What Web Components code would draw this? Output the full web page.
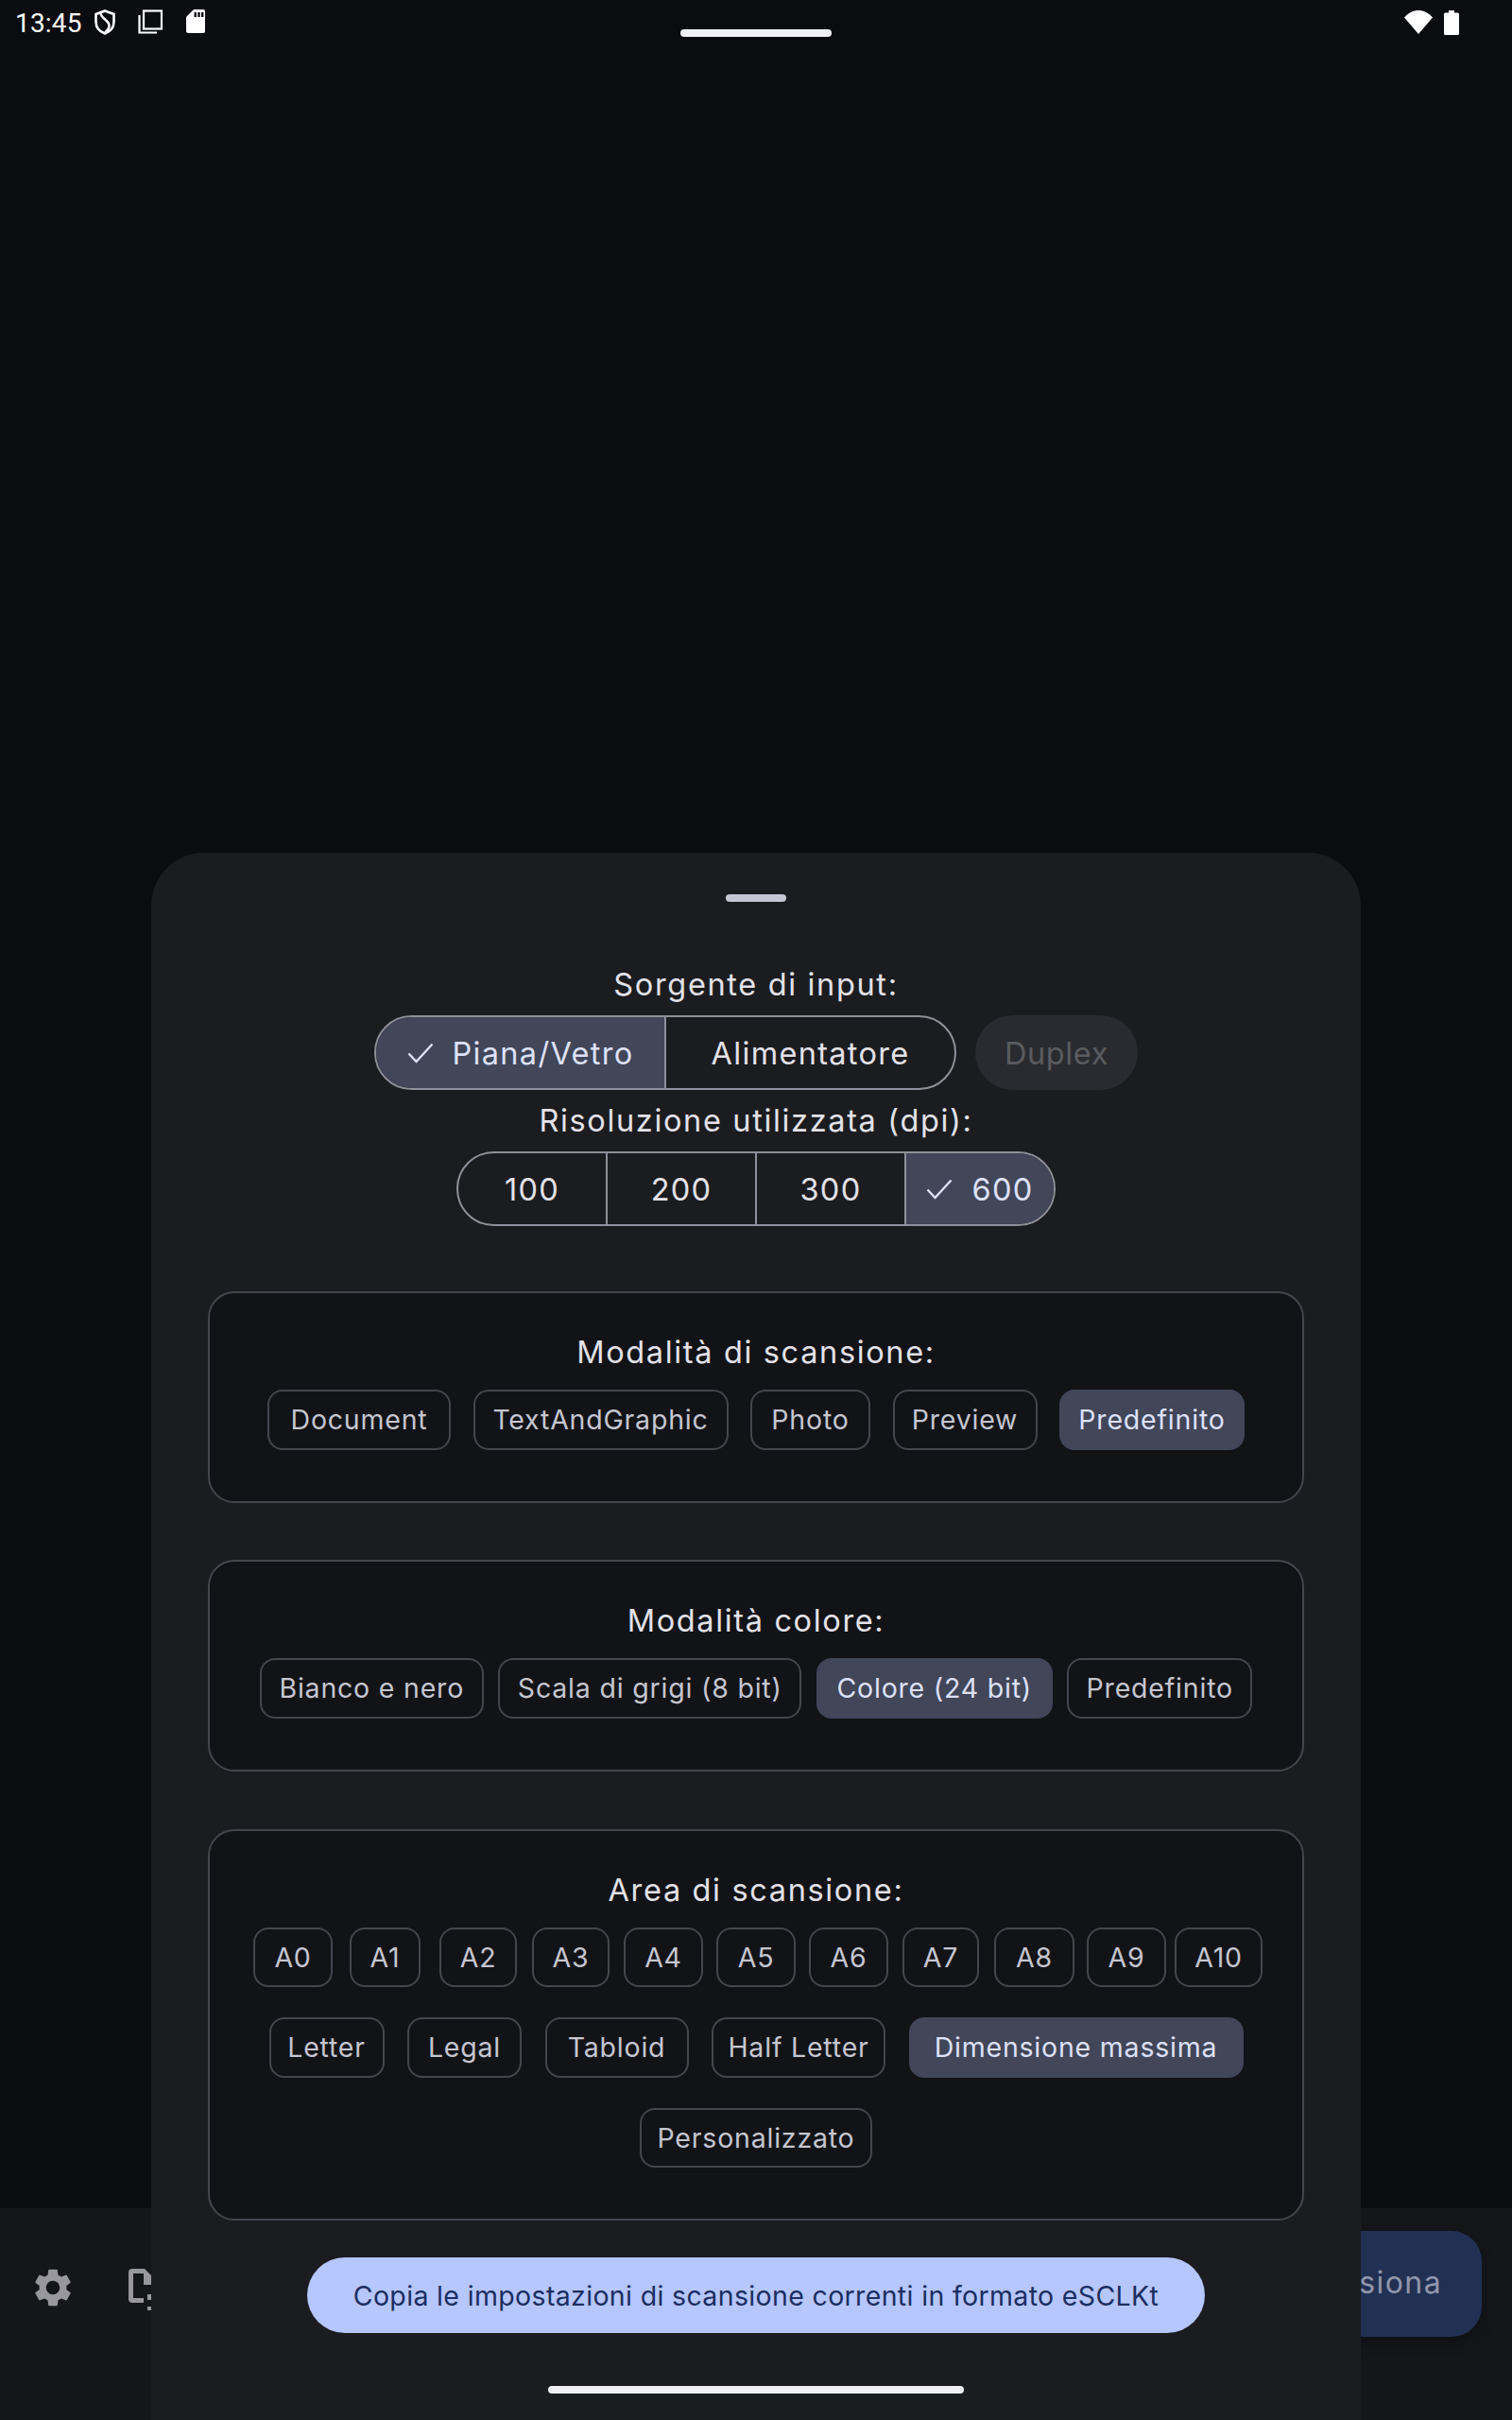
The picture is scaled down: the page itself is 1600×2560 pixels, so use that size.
<!DOCTYPE html>
<html lang="it">
<head>
<meta charset="utf-8">
<title>Impostazioni di scansione</title>
<style>
  html, body { margin: 0; height: 2560px; overflow: hidden; background: #0b0c10; }
  body { font-family: Inter, "Liberation Sans", sans-serif; position: relative; }
</style>
</head>
<body>

<status-bar></status-bar>
<scan-bar></scan-bar>

<bottom-sheet>
  <sheet-title>Sorgente di input:</sheet-title>
  <control-row>
    <seg-group style="width:616px">
      <seg-item selected>Piana/Vetro</seg-item>
      <seg-item>Alimentatore</seg-item>
    </seg-group>
    <tonal-chip>Duplex</tonal-chip>
  </control-row>
  <sheet-title>Risoluzione utilizzata (dpi):</sheet-title>
  <control-row>
    <seg-group style="width:634px">
      <seg-item>100</seg-item>
      <seg-item>200</seg-item>
      <seg-item>300</seg-item>
      <seg-item selected>600</seg-item>
    </seg-group>
  </control-row>

  <option-card style="margin-top:61px">
    <sheet-title>Modalità di scansione:</sheet-title>
    <chip-row style="gap:23.5px">
      <filter-chip style="width:194px">Document</filter-chip>
      <filter-chip style="width:270px">TextAndGraphic</filter-chip>
      <filter-chip style="width:127px">Photo</filter-chip>
      <filter-chip style="width:153px">Preview</filter-chip>
      <filter-chip style="width:196px" selected>Predefinito</filter-chip>
    </chip-row>
  </option-card>

  <option-card style="margin-top:60.5px">
    <sheet-title>Modalità colore:</sheet-title>
    <chip-row style="gap:15.5px">
      <filter-chip style="width:237px">Bianco e nero</filter-chip>
      <filter-chip style="width:321px">Scala di grigi (8 bit)</filter-chip>
      <filter-chip style="width:250px" selected>Colore (24 bit)</filter-chip>
      <filter-chip style="width:196px">Predefinito</filter-chip>
    </chip-row>
  </option-card>

  <option-card style="margin-top:61px">
    <sheet-title>Area di scansione:</sheet-title>
    <chip-row style="gap:15px;padding-left:4px">
      <filter-chip style="width:84px">A0</filter-chip>
      <filter-chip style="width:75px;margin-left:3px">A1</filter-chip>
      <filter-chip style="width:82px;margin-left:5px">A2</filter-chip>
      <filter-chip style="width:82px;margin-left:1px">A3</filter-chip>
      <filter-chip style="width:84px">A4</filter-chip>
      <filter-chip style="width:84px;margin-left:-1px">A5</filter-chip>
      <filter-chip style="width:84px;margin-left:-1px">A6</filter-chip>
      <filter-chip style="width:81px">A7</filter-chip>
      <filter-chip style="width:85px;margin-left:1px">A8</filter-chip>
      <filter-chip style="width:84px;margin-left:-2px">A9</filter-chip>
      <filter-chip style="width:93px;margin-left:-6px">A10</filter-chip>
    </chip-row>
    <chip-row style="gap:24.5px;margin-top:32px">
      <filter-chip style="width:122px">Letter</filter-chip>
      <filter-chip style="width:121px">Legal</filter-chip>
      <filter-chip style="width:152px">Tabloid</filter-chip>
      <filter-chip style="width:184px">Half Letter</filter-chip>
      <filter-chip style="width:354px" selected>Dimensione massima</filter-chip>
    </chip-row>
    <chip-row style="margin-top:32px">
      <filter-chip style="width:246px">Personalizzato</filter-chip>
    </chip-row>
  </option-card>

  <filled-button>Copia le impostazioni di scansione correnti in formato eSCLKt</filled-button>
</bottom-sheet>

<gesture-bar></gesture-bar>

<script>
// Small helper: every element is just a static shadow root from a template string.
function shadowEl(tag, html, Base = HTMLElement) {
    customElements.define(tag, class extends Base {
        constructor() {
            super();
            this.attachShadow({ mode: 'open' }).innerHTML = html;
        }
    });
}

const CHECK = `<svg class="check" width="28" height="22" viewBox="0 0 28 22" fill="none"
    stroke="currentColor" stroke-width="2.4"><path d="M1.5 11.5 L9.5 20 L26.5 1.5"/></svg>`;

shadowEl('status-bar', `
  <style>
    :host { display: grid; grid-template-columns: 1fr 160px 1fr; height: 60px; color: #fff;
            font-family: Roboto, sans-serif; }
    .left, .right { display: flex; align-items: flex-start; }
    .left { padding: 10px 0 0 16px; }
    .time { font-size: 28px; line-height: 28px; width: 84px; letter-spacing: .2px; margin-top: 1px; }
    .pill { width: 160px; height: 8px; margin-top: 31px; border-radius: 4px; background: #f1f0f5; }
    .right { justify-content: flex-end; padding: 11px 56px 0 0; }
    svg { display: block; }
  </style>
  <div class="left">
    <span class="time">13:45</span>
    <svg width="22" height="27" viewBox="0 0 22 27" fill="none" stroke="#fff" stroke-width="2.6">
      <path d="M11 1.5 L20.5 5 V13 C20.5 19 16.5 23.5 11 25.5 C5.5 23.5 1.5 19 1.5 13 V5 Z"/>
      <path d="M6.5 4 C7 10 15.5 11 15.5 17 C15.5 20 13.5 22.5 11 24"/>
    </svg>
    <svg style="margin-left:24px" width="26" height="26" viewBox="0 0 26 26" fill="none" stroke="#fff" stroke-width="2.2">
      <rect x="6" y="1.5" width="19" height="19"/>
      <path d="M1.5 6 V24.5 H20"/>
    </svg>
    <svg style="margin-left:25px" width="20" height="25" viewBox="0 0 20 25">
      <path fill="#fff" d="M8 0 H18 a2 2 0 0 1 2 2 V23 a2 2 0 0 1-2 2 H2 a2 2 0 0 1-2-2 V8 Z"/>
      <path fill="#0b0c10" d="M8.5 3 h2.4 v5 h-2.4 Z M12.3 3 h2.4 v5 h-2.4 Z M16 3 h2.4 v5 h-2.4 Z"/>
    </svg>
  </div>
  <div class="pill"></div>
  <div class="right">
    <svg width="30" height="25" viewBox="0 0 30 25">
      <path fill="#fff" d="M0 7.5 C8.5 -2.5 21.5 -2.5 30 7.5 L15 25 Z"/>
    </svg>
    <svg style="margin-left:12px" width="16" height="26" viewBox="0 0 16 26">
      <path fill="#fff" d="M5 0 H11 V2.5 H14.5 a1.5 1.5 0 0 1 1.5 1.5 V24.5 a1.5 1.5 0 0 1-1.5 1.5 H1.5 a1.5 1.5 0 0 1-1.5-1.5 V4 a1.5 1.5 0 0 1 1.5-1.5 H5 Z"/>
    </svg>
  </div>
`);

// The app's own toolbar, mostly covered by the sheet.
shadowEl('scan-bar', `
  <style>
    :host { display: flex; justify-content: space-between; align-items: flex-start; box-sizing: border-box;
            position: absolute; left: 0; right: 0; top: 2336px; height: 224px;
            padding: 24px 32px 0 32px; background: #15161a; }
    .icons { display: flex; margin-top: 36px; }
    .file { margin-left: 56px; margin-top: 4px; }
    .action { display: flex; align-items: center; justify-content: flex-end; box-sizing: border-box;
              width: 200px; height: 112px; padding: 0 42px 3px 0; border-radius: 32px; background: #213053;
              color: #9196ac; font-size: 32px; font-weight: 400; letter-spacing: 1.4px;
              box-shadow: 0 6px 14px rgba(10,8,12,.35); }
    svg { display: block; }
  </style>
  <div class="icons">
    <svg width="48" height="48" viewBox="0 0 24 24">
      <path fill="#97979d" d="M19.14 12.94c.04-.3.06-.61.06-.94 0-.32-.02-.64-.07-.94l2.03-1.58c.18-.14.23-.41.12-.61l-1.92-3.32c-.12-.22-.37-.29-.59-.22l-2.39.96c-.5-.38-1.03-.7-1.62-.94l-.36-2.54c-.04-.24-.24-.41-.48-.41h-3.84c-.24 0-.43.17-.47.41l-.36 2.54c-.59.24-1.13.57-1.62.94l-2.39-.96c-.22-.08-.47 0-.59.22L2.74 8.87c-.12.21-.08.47.12.61l2.03 1.58c-.05.3-.09.63-.09.94s.02.64.07.94l-2.03 1.58c-.18.14-.23.41-.12.61l1.92 3.32c.12.22.37.29.59.22l2.39-.96c.5.38 1.03.7 1.62.94l.36 2.54c.05.24.24.41.48.41h3.84c.24 0 .44-.17.47-.41l.36-2.54c.59-.24 1.13-.56 1.62-.94l2.39.96c.22.08.47 0 .59-.22l1.92-3.32c.12-.22.07-.47-.12-.61l-2.01-1.58zM12 15.6c-1.98 0-3.6-1.62-3.6-3.6s1.62-3.6 3.6-3.6 3.6 1.62 3.6 3.6-1.62 3.6-3.6 3.6z"/>
    </svg>
    <svg class="file" width="30" height="44" viewBox="0 0 30 44">
      <path fill="#97979d" d="M4 0 H17 L28 11 V17 H16 V5 H5 V31 H16 V36 H4 a4 4 0 0 1-4-4 V4 a4 4 0 0 1 4-4 Z"/>
      <path fill="#97979d" d="M20 27 h5 v6 h-5 Z M20 40 h5 v4 h-5 Z"/>
    </svg>
  </div>
  <div class="action">siona</div>
`);

shadowEl('bottom-sheet', `
  <style>
    :host { display: flex; flex-direction: column; align-items: center; box-sizing: border-box;
            position: absolute; left: 160px; top: 902px; width: 1280px; height: 1658px;
            padding: 44px 60px 0; background: #1b1c20; border-radius: 56px 56px 0 0; }
    .handle { width: 64px; height: 8px; border-radius: 4px; background: #c5c6d0; margin-bottom: 63px; flex: none; }
  </style>
  <div class="handle"></div>
  <slot></slot>
`);

shadowEl('sheet-title', `
  <style>
    :host { display: block; height: 48px; line-height: 50px; text-align: center;
            font-size: 32.5px; font-weight: 400; letter-spacing: 1.65px; color: #e3e2e9; }
  </style>
  <slot></slot>
`);

shadowEl('control-row', `
  <style>
    :host { display: flex; justify-content: center; gap: 20px; margin: 9px 0 8px; width: 100%; }
  </style>
  <slot></slot>
`);

shadowEl('seg-group', `
  <style>
    :host { display: flex; box-sizing: border-box; height: 79px; border: 2px solid #8f9099; border-radius: 40px;
            overflow: hidden; }
  </style>
  <slot></slot>
`);

class SegItem extends HTMLElement {
    constructor() {
        super();
        this.attachShadow({ mode: 'open' }).innerHTML = `
          <style>
            :host { flex: 1 1 0; display: flex; align-items: center; justify-content: center; gap: 20px;
                    padding-top: 1px; font-size: 32.5px; font-weight: 400; letter-spacing: 1.3px; color: #e3e2e9; }
            :host(:not(:last-child)) { border-right: 2px solid #8f9099; }
            :host([selected]) { background: #414659; color: #dde1f9; }
            .check { display: none; flex: none; }
            :host([selected]) .check { display: block; }
          </style>
          ${CHECK}<span><slot></slot></span>`;
    }
}
customElements.define('seg-item', SegItem);

shadowEl('tonal-chip', `
  <style>
    :host { display: flex; align-items: center; justify-content: center; width: 172px; height: 79px;
            border-radius: 40px; background: #2a2b30; color: #5a5b60; padding-top: 1px; box-sizing: border-box;
            font-size: 32.5px; font-weight: 400; letter-spacing: .6px; }
  </style>
  <slot></slot>
`);

shadowEl('option-card', `
  <style>
    :host { display: block; box-sizing: border-box; width: 1160px; padding: 38px 0 54px;
            border: 2px solid #45464e; border-radius: 28px; background: #121317; }
  </style>
  <slot></slot>
`);

shadowEl('chip-row', `
  <style>
    :host { display: flex; justify-content: center; margin-top: 16px; }
  </style>
  <slot></slot>
`);

shadowEl('filter-chip', `
  <style>
    :host { display: flex; align-items: center; justify-content: center; box-sizing: border-box; flex: none;
            height: 63.5px; border: 2px solid #45464e; border-radius: 16px;
            font-size: 28.5px; font-weight: 400; letter-spacing: .8px; color: #c5c6d0; white-space: nowrap; }
    :host([selected]) { background: #414659; border-color: #414659; color: #dde1f9; }
  </style>
  <slot></slot>
`);

shadowEl('filled-button', `
  <style>
    :host { display: flex; align-items: center; justify-content: center; flex: none; margin-top: 39px;
            width: 950px; height: 80px; border-radius: 40px; background: #b6c6ff; color: #1a2e60;
            font-size: 28.5px; font-weight: 400; letter-spacing: .35px; white-space: nowrap; }
  </style>
  <slot></slot>
`);

shadowEl('gesture-bar', `
  <style>
    :host { display: block; position: absolute; left: 580px; top: 2524px; width: 440px; height: 8px;
            border-radius: 4px; background: #f1f0f5; }
  </style>
`);
</script>
</body>
</html>
